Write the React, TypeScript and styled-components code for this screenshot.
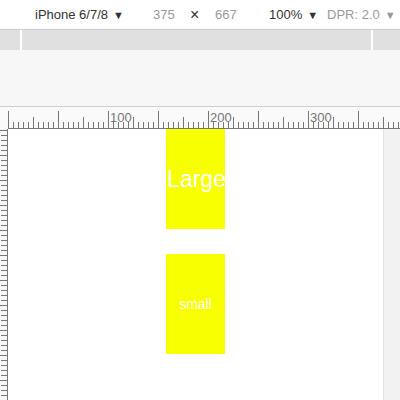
import React from 'react';
import styled, { createGlobalStyle } from 'styled-components';

const GlobalStyle = createGlobalStyle`
  html, body {
    margin: 0;
    padding: 0;
    width: 400px;
    height: 400px;
    overflow: hidden;
    background: #ffffff;
    font-family: 'Liberation Sans', Arial, sans-serif;
  }
`;

const s = {
  Frame: styled.div`
    display: flex;
    flex-direction: column;
    width: 400px;
    height: 400px;
    overflow: hidden;
  `,
  DeviceBar: styled.div`
    display: flex;
    align-items: center;
    height: 29px;
    border-bottom: 1px solid #cfcfcf;
    background: #ffffff;
    font-size: 13px;
    white-space: nowrap;
  `,
  BarRow: styled.div`
    position: relative;
    display: flex;
    align-items: center;
    width: 100%;
    height: 100%;
  `,
  BarItem: styled.span<{ left: number; muted?: boolean; big?: boolean }>`
    position: absolute;
    left: ${(p) => p.left}px;
    font-size: ${(p) => (p.big ? 16 : 13)}px;
    color: ${(p) => (p.muted ? '#999999' : '#333333')};
  `,
  Arrow: styled.span<{ muted?: boolean }>`
    font-size: 11px;
    margin-left: 5px;
    color: ${(p) => (p.muted ? '#999999' : '#333333')};
  `,
  MediaBar: styled.div`
    display: flex;
    height: 20px;
    background: #e0e0e0;
  `,
  MediaSplit: styled.div<{ w: number }>`
    width: ${(p) => p.w}px;
    border-right: 2px solid #ffffff;
    flex-shrink: 0;
  `,
  Spacer: styled.div`
    height: 56px;
    background: #f7f7f7;
    border-bottom: 1px solid #cfcfcf;
  `,
  RulerRow: styled.div`
    display: flex;
    height: 22px;
    background: #fafafa;
  `,
  Body: styled.div`
    display: flex;
    flex: 1;
    min-height: 0;
  `,
  SideRuler: styled.div`
    width: 8px;
    flex-shrink: 0;
    background: #f7f7f7;
  `,
  Page: styled.div`
    width: 375px;
    flex-shrink: 0;
    background: #ffffff;
    display: flex;
    flex-direction: column;
    gap: 25px;
    padding-left: 158px;
    box-sizing: border-box;
  `,
  Gutter: styled.div`
    flex: 1;
    background: #f2f2f2;
    border-left: 1px solid #e4e4e4;
  `,
  Block: styled.div<{ size: number }>`
    width: 59px;
    height: 100px;
    flex-shrink: 0;
    background: #f8ff00;
    color: #ffffff;
    font-size: ${(p) => p.size}px;
    display: flex;
    align-items: center;
    justify-content: center;
    white-space: nowrap;
  `,
  BlockText: styled.span<{ shift: number }>`
    margin-left: ${(p) => p.shift}px;
  `,
};

const TopRuler = () => {
  const ticks = [];
  for (let i = 0; i <= 400; i += 5) {
    const x = 8.5 + i;
    const top = i % 50 === 0 ? 4 : i % 25 === 0 ? 10 : 15;
    ticks.push(<line key={i} x1={x} x2={x} y1={top} y2={21} stroke="#777" strokeWidth={1} />);
  }
  return (
    <svg width={400} height={22} style={{ display: 'block' }}>
      {ticks}
      <line x1={8} x2={400} y1={21.5} y2={21.5} stroke="#777" strokeWidth={1} />
      {[100, 200, 300].map((n) => (
        <text key={n} x={8 + n + 2} y={15} fontSize={13} fill="#777" fontFamily="'Liberation Sans', Arial, sans-serif">
          {n}
        </text>
      ))}
    </svg>
  );
};

const LeftRuler = () => {
  const ticks = [];
  for (let i = 0; i <= 280; i += 5) {
    const y = 1.5 + i;
    const left = i % 25 === 0 ? 0 : 1;
    ticks.push(<line key={i} x1={left} x2={8} y1={y} y2={y} stroke="#777" strokeWidth={1} />);
  }
  return (
    <svg width={8} height={280} style={{ display: 'block' }}>
      {ticks}
      <line x1={7.5} x2={7.5} y1={0} y2={280} stroke="#777" strokeWidth={1} />
    </svg>
  );
};

export default function App() {
  return (
    <>
      <GlobalStyle />
      <s.Frame>
        <s.DeviceBar>
          <s.BarRow>
            <s.BarItem left={35}>
              iPhone 6/7/8<s.Arrow>▼</s.Arrow>
            </s.BarItem>
            <s.BarItem left={153} muted>375</s.BarItem>
            <s.BarItem left={190} big>×</s.BarItem>
            <s.BarItem left={215} muted>667</s.BarItem>
            <s.BarItem left={269}>
              100%<s.Arrow>▼</s.Arrow>
            </s.BarItem>
            <s.BarItem left={327} muted>
              DPR: 2.0<s.Arrow muted>▼</s.Arrow>
            </s.BarItem>
          </s.BarRow>
        </s.DeviceBar>
        <s.MediaBar>
          <s.MediaSplit w={20} />
          <s.MediaSplit w={349} />
        </s.MediaBar>
        <s.Spacer />
        <s.RulerRow>
          <TopRuler />
        </s.RulerRow>
        <s.Body>
          <s.SideRuler>
            <LeftRuler />
          </s.SideRuler>
          <s.Page>
            <s.Block size={23}>
              <s.BlockText shift={2}>Large</s.BlockText>
            </s.Block>
            <s.Block size={14}>
              <s.BlockText shift={0}>small</s.BlockText>
            </s.Block>
          </s.Page>
          <s.Gutter />
        </s.Body>
      </s.Frame>
    </>
  );
}
